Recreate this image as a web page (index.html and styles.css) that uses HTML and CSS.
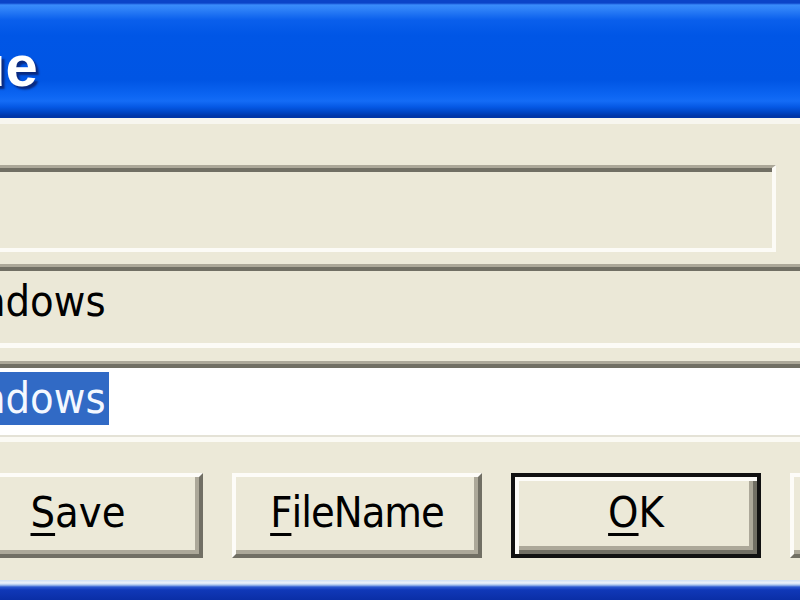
FILE: index.html
```html
<!DOCTYPE html>
<html lang="en">
<head>
<meta charset="utf-8">
<title>Dialog</title>
<link rel="stylesheet" href="styles.css">
</head>
<body>
<div class="window">
  <div class="titlebar"><span class="title">ue</span></div>
  <div class="client">
    <div class="field field-top"></div>
    <div class="field field-ro"><span class="txt">ndows</span></div>
    <div class="field field-edit"><span class="sel">ndows</span></div>
    <div class="buttons">
      <button class="btn"><u>S</u>ave</button>
      <button class="btn btn-tight"><u>F</u>ileName</button>
      <button class="btn btn-default"><u>O</u>K</button>
      <button class="btn"></button>
    </div>
  </div>
  <div class="frame-bottom"></div>
</div>
</body>
</html>
```
FILE: styles.css
```css
* { box-sizing: border-box; margin: 0; padding: 0; }
html, body { width: 800px; height: 600px; overflow: hidden; }
body {
  background: #ece9d8;
  font-family: "DejaVu Sans Condensed", "DejaVu Sans", sans-serif;
}
.window {
  width: 800px;
  height: 600px;
  display: flex;
  flex-direction: column;
}
.titlebar {
  flex: none;
  height: 118px;
  padding-top: 37px;
  background: linear-gradient(to bottom,
    #0b44c8 0, #0b44c8 3px, #3a8cfb 5px, #2f82f8 9px, #0a5fec 20px,
    #0056e6 35px, #0055e4 80px, #0d66f3 96px, #146cf6 101px,
    #0558e4 107px, #0046c6 112px, #0036a8 116px, #0036a8 118px);
}
.title {
  display: block;
  margin-left: -30px;
  font: bold 58px/58px "Liberation Sans", Arial, sans-serif;
  color: #ffffff;
  text-shadow: 3px 3px 2px #0a2a80;
}
.client {
  flex: none;
  height: 462px;
  border-top: 6px solid #f7f6ef;
  padding: 41px 0 22px;
  display: flex;
  flex-direction: column;
}
.field {
  flex: none;
  margin-left: -20px;
  border-top: 3px solid #aca899;
  box-shadow: inset 0 4px 0 #716f64;
}
.field-top {
  height: 87px;
  width: 796px;
  border-right: 4px solid #fcfbf6;
  border-bottom: 4px solid #fcfbf6;
  background: #ece9d8;
}
.field-ro {
  margin-top: 12px;
  height: 84px;
  width: 840px;
  border-bottom: 5px solid #fcfbf6;
  background: #ebe8d7;
  padding: 13px 0 0 1px;
  font-size: 43px;
  line-height: 43px;
  color: #000;
}
.field-edit {
  margin-top: 13px;
  height: 81px;
  width: 840px;
  border-bottom: 5px solid #fbfaf4;
  background: #ffffff;
  box-shadow: inset 0 4px 0 #716f64, inset 0 -2px 0 #e4e2d6;
  padding: 8px 0 0 0;
}
.sel {
  display: inline-block;
  height: 53px;
  line-height: 53px;
  font-size: 43px;
  padding: 0 3px 0 1px;
  background: #316ac5;
  color: #f4f8ff;
}
.buttons {
  flex: none;
  margin-top: 31px;
  margin-left: -47px;
  height: 85px;
  display: flex;
  gap: 29px;
}
.btn {
  appearance: none;
  flex: none;
  width: 250px;
  height: 85px;
  background: #ece9d8;
  border: 4px solid;
  border-color: #fdfcf8 #716f64 #716f64 #fdfcf8;
  box-shadow: inset -4px -4px 0 #aca899;
  font-family: "DejaVu Sans Condensed", "DejaVu Sans", sans-serif;
  font-size: 43px;
  line-height: 43px;
  color: #000;
  display: flex;
  align-items: center;
  justify-content: center;
  padding-bottom: 6px;
}
.btn-tight { letter-spacing: -1px; }
.btn u {
  text-decoration-thickness: 3px;
  text-underline-offset: 6px;
}
.btn-default {
  border: 4px solid #111;
  box-shadow: inset 4px 4px 0 #fdfcf8, inset -4px -4px 0 #716f64, inset -8px -8px 0 #aca899;
}
.frame-bottom {
  flex: none;
  height: 20px;
  background: linear-gradient(to bottom,
    #cfe0f4 0, #eef4fb 3px, #a8c4ec 5px, #2a58d0 7px, #1038b8 10px, #0a2ea6 20px);
}
```
